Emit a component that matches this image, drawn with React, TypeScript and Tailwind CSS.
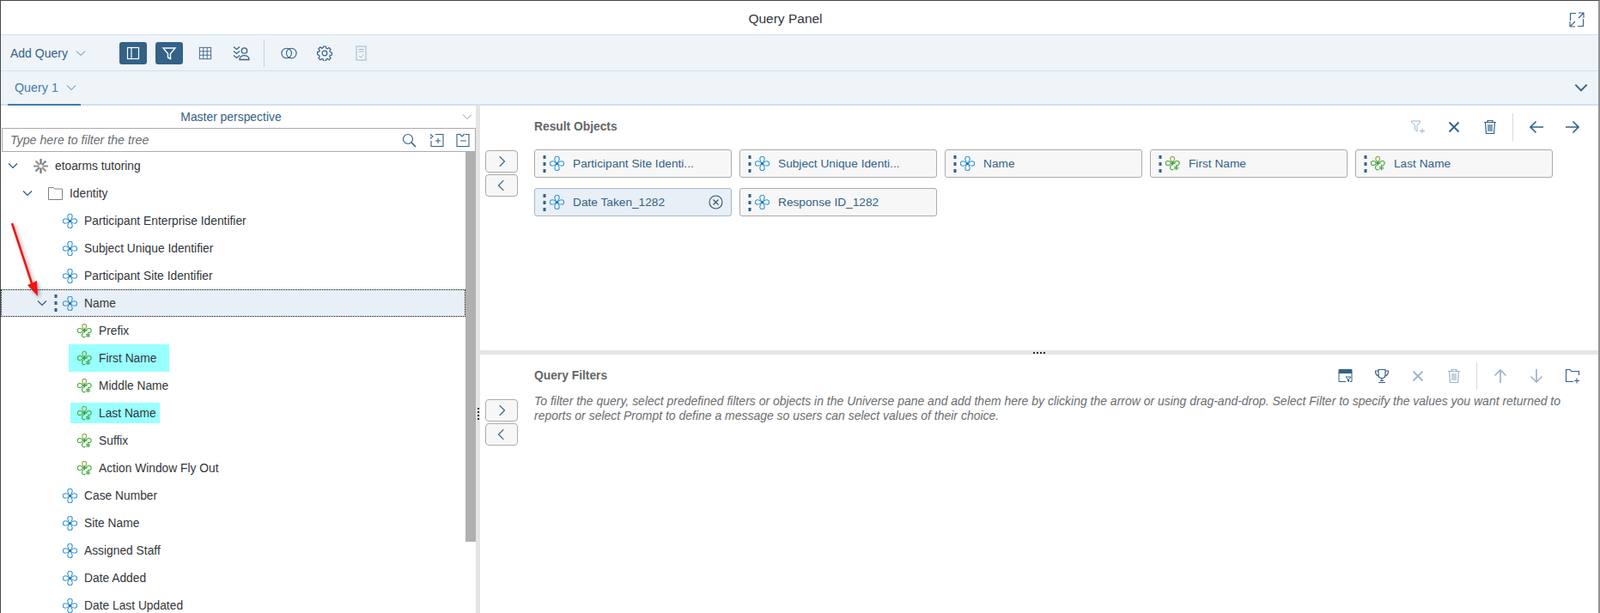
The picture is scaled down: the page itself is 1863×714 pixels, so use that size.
import React from 'react';

const FONT = "font-['Liberation_Sans',sans-serif]";

type IconProps = { className?: string };

const Svg: React.FC<{ className?: string; size?: number; children: React.ReactNode; sw?: number }> = ({ className, size = 18, children, sw = 1.2 }) => (
  <svg width={size} height={size} viewBox="0 0 18 18" fill="none" stroke="currentColor" strokeWidth={sw} className={className}>
    {children}
  </svg>
);

const Chevron: React.FC<IconProps & { dir?: 'down' | 'left' | 'right'; size?: number; sw?: number }> = ({ dir = 'down', className, size = 12, sw = 1.2 }) => (
  <svg width={size} height={size} viewBox="0 0 12 12" fill="none" stroke="currentColor" strokeWidth={sw} className={className}>
    {dir === 'down' && <path d="M1 3.500 6 8.500l5-5" />}
    {dir === 'left' && <path d="M8 1 3 6l5 5" />}
    {dir === 'right' && <path d="M4 1l5 5-5 5" />}
  </svg>
);

const Grip = () => (
  <svg width="4" height="20" viewBox="0 0 4 20" className="text-[#346187]" fill="currentColor">
    <rect x="0.5" y="0" width="3" height="4" />
    <rect x="0.5" y="8" width="3" height="4" />
    <rect x="0.5" y="16" width="3" height="4" />
  </svg>
);

// blue dimension object
const Dim = () => (
  <svg width="17" height="17" viewBox="0 0 17 17" fill="none" stroke="#2f93d6" strokeWidth="1.100" className="shrink-0">
    <path d="M7.300 7C6.500 5.500 5.800 4.300 5.800 3a2.700 2.700 0 0 1 5.400 0c0 1.300-.7 2.500-1.500 4" />
    <path d="M7.300 10c-.8 1.500-1.500 2.700-1.500 4a2.700 2.700 0 0 0 5.400 0c0-1.300-.7-2.500-1.500-4" />
    <path d="M7 7.300C5.500 6.500 4.300 5.800 3 5.800a2.700 2.700 0 0 0 0 5.400c1.300 0 2.500-.7 4-1.500" />
    <path d="M10 7.300c1.500-.8 2.700-1.500 4-1.500a2.700 2.700 0 0 1 0 5.400c-1.300 0-2.500-.7-4-1.500" />
    <path d="M7.300 7v3M9.700 7v3" />
    <circle cx="8.500" cy="8.500" r="1.500" fill="#1c6fb0" stroke="none" />
  </svg>
);

// green detail object
const Detail = () => (
  <svg width="17" height="17" viewBox="0 0 17 17" fill="none" stroke="#45a53c" strokeWidth="1.100" className="shrink-0">
    <path d="M7 6.500C6.300 5 5.800 4 5.800 2.800a2.400 2.400 0 0 1 4.800 0c0 1.200-.5 2.200-1.200 3.700" stroke="#8aa63a" />
    <path d="M6 6.800C4.800 6 3.800 5.500 2.800 5.500a2.500 2.500 0 0 0 0 5c1 0 2-.5 3.200-1.300" />
    <path d="M10.500 6.800c1.200-.8 2.200-1.300 3.200-1.300a2.500 2.500 0 0 1 0 5c-.5 0-1-.1-1.500-.3" />
    <path d="M6.800 10c-.8 1.300-1.300 2.300-1.300 3.300a2.400 2.400 0 0 0 3.800 2" />
    <path d="M12.500 10.800v5.400M10 12.200l5 2.600M15 12.200l-5 2.600" />
    <path d="M5.500 8h6M8.200 5.500v5" strokeWidth="1.600" stroke="#2f9a35" />
  </svg>
);

const Universe = () => (
  <svg width="17" height="17" viewBox="0 0 17 17" fill="none" strokeWidth="2.200" className="shrink-0">
    <path d="M8.500 0v6.500M8.500 10.500V17" stroke="#75797c" />
    <path d="M0 8.500h6.500M10.500 8.500H17" stroke="#8b8f92" />
    <path d="M2.500 2.500l4.500 4.500M10 10l4.500 4.500" stroke="#a8916f" />
    <path d="M14.500 2.500 10 7M7 10l-4.500 4.500" stroke="#6d8a96" />
  </svg>
);

const Folder = () => (
  <svg width="17" height="17" viewBox="0 0 17 17" fill="none" stroke="#7b8288" strokeWidth="1" className="shrink-0">
    <path d="M.5 15.500V1.500h6l1 1.500h9v12.500Z" />
  </svg>
);

type Row = { label: string; depth: number; kind: 'universe' | 'folder' | 'dim' | 'detail'; open?: boolean; selected?: boolean; mark?: 'full' | 'short' };

const rows: Row[] = [
  { label: 'etoarms tutoring', depth: 0, kind: 'universe', open: true },
  { label: 'Identity', depth: 1, kind: 'folder', open: true },
  { label: 'Participant Enterprise Identifier', depth: 2, kind: 'dim' },
  { label: 'Subject Unique Identifier', depth: 2, kind: 'dim' },
  { label: 'Participant Site Identifier', depth: 2, kind: 'dim' },
  { label: 'Name', depth: 2, kind: 'dim', open: true, selected: true },
  { label: 'Prefix', depth: 3, kind: 'detail' },
  { label: 'First Name', depth: 3, kind: 'detail', mark: 'full' },
  { label: 'Middle Name', depth: 3, kind: 'detail' },
  { label: 'Last Name', depth: 3, kind: 'detail', mark: 'short' },
  { label: 'Suffix', depth: 3, kind: 'detail' },
  { label: 'Action Window Fly Out', depth: 3, kind: 'detail' },
  { label: 'Case Number', depth: 2, kind: 'dim' },
  { label: 'Site Name', depth: 2, kind: 'dim' },
  { label: 'Assigned Staff', depth: 2, kind: 'dim' },
  { label: 'Date Added', depth: 2, kind: 'dim' },
  { label: 'Date Last Updated', depth: 2, kind: 'dim' },
];

const indent = ['pl-[6px]', 'pl-[23px]', 'pl-[40px]', 'pl-[57px]'];

const kindIcon = { universe: <Universe />, folder: <Folder />, dim: <Dim />, detail: <Detail /> };

const TreeRow: React.FC<{ row: Row }> = ({ row }) => {
  const body = (
    <>
      {kindIcon[row.kind]}
      <span className="ml-2 pt-[2px] text-[13.800px] text-[#32363a] whitespace-nowrap">{row.label}</span>
    </>
  );
  return (
    <div className={`h-8 flex items-center ${indent[row.depth]} ${row.selected ? 'bg-[#e8eff6] outline-1 outline-dotted -outline-offset-1 outline-black' : ''}`}>
      <div className="w-4 flex justify-center text-[#2c5a85]">{row.open && <Chevron />}</div>
      <div className="w-4 flex justify-center">{row.selected && <Grip />}</div>
      {row.mark === 'full' && <div className="h-8 flex items-center bg-[#99ffff] -ml-[10px] pl-[10px] pr-[15px]">{body}</div>}
      {row.mark === 'short' && <div className="h-6 flex items-center bg-[#99ffff] -ml-[8px] pl-[8px] pr-[4px]">{body}</div>}
      {!row.mark && body}
    </div>
  );
};

const ToolBtn: React.FC<{ children: React.ReactNode; muted?: boolean }> = ({ children, muted }) => (
  <div className={`w-[42px] h-8 flex items-center justify-center ${muted ? 'text-[#9db5cb]' : 'text-[#346187]'}`}>{children}</div>
);

const Divider = () => <div className="w-px h-8 bg-[#d5dadf]" />;

const MoveButtons = () => (
  <div className="w-[38px] ml-[6px] mt-[52px] flex flex-col gap-[2px] shrink-0">
    <div className="h-[26px] bg-[#f7f7f7] border border-[#ababab] rounded flex items-center justify-center text-[#346187]">
      <Chevron dir="right" size={14} sw={1} />
    </div>
    <div className="h-[26px] bg-[#f7f7f7] border border-[#ababab] rounded flex items-center justify-center text-[#346187]">
      <Chevron dir="left" size={14} sw={1} />
    </div>
  </div>
);

const XIcon = () => (
  <Svg sw={1.9}>
    <path d="M3.500 3.500l11 11M14.500 3.500l-11 11" />
  </Svg>
);

const Trash = () => (
  <Svg sw={1.2}>
    <path d="M2 3.500h14M6 3V1.500h6V3" />
    <path d="M3.500 3.500l1 13h9l1-13" />
    <path d="M7 6v8M9 6v8M11 6v8" />
  </Svg>
);

const ArrowH: React.FC<{ left?: boolean }> = ({ left }) => (
  <Svg sw={1.7}>
    {left ? <path d="M17 9H2M8.500 2.500 2 9l6.500 6.500" /> : <path d="M1 9h15M9.500 2.500 16 9l-6.500 6.500" />}
  </Svg>
);

const ArrowV: React.FC<{ up?: boolean }> = ({ up }) => (
  <Svg sw={1.7}>
    {up ? <path d="M9 17V2M2.500 8.500 9 2l6.500 6.500" /> : <path d="M9 1v15M2.500 9.500 9 16l6.500-6.500" />}
  </Svg>
);

const Gear = () => (
  <svg width="18" height="18" viewBox="0 0 18 18" fill="none" stroke="currentColor" strokeWidth="1.200">
    <circle cx="9" cy="9" r="2.800" />
    <path d="M7.600 1h2.800l.4 2.200 1.400.6 1.900-1.300 2 2-1.300 1.900.6 1.400 2.100.4v2.800l-2.100.4-.6 1.400 1.300 1.900-2 2-1.900-1.300-1.400.6-.4 2.100H7.600l-.4-2.100-1.400-.6-1.900 1.300-2-2 1.300-1.900-.6-1.400L.5 10.400V7.600l2.100-.4.600-1.400-1.300-1.900 2-2 1.900 1.300 1.400-.6Z" />
  </svg>
);

type Chip = { label: string; kind: 'dim' | 'detail'; active?: boolean };

const chips: Chip[] = [
  { label: 'Participant Site Identi...', kind: 'dim' },
  { label: 'Subject Unique Identi...', kind: 'dim' },
  { label: 'Name', kind: 'dim' },
  { label: 'First Name', kind: 'detail' },
  { label: 'Last Name', kind: 'detail' },
  { label: 'Date Taken_1282', kind: 'dim', active: true },
  { label: 'Response ID_1282', kind: 'dim' },
];

const ObjectChip: React.FC<{ chip: Chip }> = ({ chip }) => (
  <div className={`h-[33px] rounded-[3px] border flex items-center pl-[9px] pr-[9px] ${chip.active ? 'bg-[#e8eff6] border-[#a4b8ca]' : 'bg-[#f7f7f7] border-[#ababab]'}`}>
    <Grip />
    <div className="ml-[4px]">{chip.kind === 'dim' ? <Dim /> : <Detail />}</div>
    <span className="ml-[10px] pt-[2px] flex-1 text-[13.700px] text-[#346187] whitespace-nowrap">{chip.label}</span>
    {chip.active && (
      <svg width="17" height="17" viewBox="0 0 17 17" fill="none" stroke="#32506b" strokeWidth="1.100">
        <circle cx="8.500" cy="8.500" r="7.500" />
        <path d="M5.500 5.500l6 6M11.500 5.500l-6 6" />
      </svg>
    )}
  </div>
);

export default function App() {
  return (
    <div className={`relative w-[1863px] h-[714px] overflow-hidden flex flex-col bg-white border-t border-l border-r-2 border-t-[#4a4a4a] border-l-[#4a4a4a] border-r-[#8f9296] ${FONT}`}>
      {/* title */}
      <div className="h-[39px] shrink-0 relative flex items-center justify-center pr-[33px] text-[15.500px] text-[#32363a] bg-white">
        <span className="pt-[3px]">Query Panel</span>
        <div className="absolute right-[16px] top-[13px] text-[#346187]">
          <svg width="18" height="18" viewBox="0 0 18 18" fill="none" stroke="currentColor" strokeWidth="1.100">
            <path d="M8 1.500H1.500V10M10 16.500h6.500V8M11 1h6v6M17 1l-6 6M1 17h6M1 17v-6M1 17l6-6" />
          </svg>
        </div>
      </div>

      {/* toolbar */}
      <div className="h-[43px] shrink-0 bg-[#eff4f9] border-y border-[#cfe0f0] flex items-center text-[#346187]">
        <div className="w-[138px] pl-[11px] flex items-center">
          <span className="text-[14px] pt-[2px]">Add Query</span>
          <Chevron className="ml-[9px] text-[#5b7c99]" sw={1} />
        </div>
        <div className="w-8 h-[26px] rounded-[3px] bg-[#346187] flex items-center justify-center text-white">
          <Svg size={18}>
            <rect x="2.500" y="2.500" width="13" height="13" />
            <path d="M7 2.500v13" />
          </Svg>
        </div>
        <div className="ml-[10px] w-8 h-[26px] rounded-[3px] bg-[#346187] flex items-center justify-center text-white">
          <Svg size={18} sw={1.4}>
            <path d="M2 3h14l-5.500 6.500V15.500L7.500 14V9.500Z" />
          </Svg>
        </div>
        <div className="ml-[5px] flex">
          <ToolBtn>
            <Svg size={16} sw={1}>
              <rect x="1.500" y="1.500" width="15" height="15" />
              <path d="M6.500 1.500v15M11.500 1.500v15M1.500 6.500h15M1.500 11.500h15" />
            </Svg>
          </ToolBtn>
          <ToolBtn>
            <svg width="20" height="18" viewBox="0 0 20 18" fill="none" stroke="currentColor" strokeWidth="1.300">
              <path d="M1 1.500l3.500 3 3.500-3M1 6.500l3.500 3 3.500-3M1 11.500l3.500 3 3.500-3" />
              <circle cx="13.500" cy="6" r="3.200" />
              <path d="M8 16.500c0-6.500 11-6.500 11 0Z" />
            </svg>
          </ToolBtn>
        </div>
        <div className="ml-[5px] w-px h-8 bg-[#c8d0d8]" />
        <div className="ml-[7px] flex">
          <ToolBtn>
            <svg width="19" height="14" viewBox="0 0 19 14" fill="none" stroke="currentColor" strokeWidth="1.100">
              <circle cx="6.700" cy="7" r="5.800" />
              <circle cx="12.300" cy="7" r="5.800" />
            </svg>
          </ToolBtn>
          <ToolBtn>
            <Gear />
          </ToolBtn>
          <ToolBtn muted>
            <svg width="13" height="18" viewBox="0 0 13 18" fill="none" stroke="currentColor" strokeWidth="1">
              <rect x="1" y="1" width="11" height="16" />
              <path d="M3.500 4.500h6M3.500 7h6M4 12l2 2 3.500-3.500" />
            </svg>
          </ToolBtn>
        </div>
      </div>

      {/* tabs */}
      <div className="h-[40px] shrink-0 bg-[#eff4f9] border-b-2 border-[#d1e0ee] flex justify-between">
        <div className="ml-2 w-[85px] h-[40px] border-b-2 border-[#427cac] pl-2 flex items-center text-[#427cac]">
          <span className="text-[14.300px] pt-[2px]">Query 1</span>
          <Chevron className="ml-[9px]" sw={1} />
        </div>
        <div className="mr-[12px] flex items-center text-[#346187]">
          <Chevron size={16} sw={1.5} />
        </div>
      </div>

      <div className="flex-1 flex min-h-0">
        {/* left pane */}
        <div className="w-[553px] shrink-0 flex flex-col min-h-0">
          <div className="h-[26px] shrink-0 flex items-center">
            <span className="flex-1 text-center text-[13.900px] text-[#346187] pl-[3px]">Master perspective</span>
            <div className="w-5 flex justify-center text-[#8a99a8]">
              <Chevron sw={1} />
            </div>
          </div>
          <div className="h-7 shrink-0 ml-px border border-[#ababab] flex items-center pl-[9px] bg-white">
            <span className="flex-1 pt-[2px] text-[14.200px] italic text-[#6a6d70]">Type here to filter the tree</span>
            <div className="flex text-[#346187]">
              <div className="w-8 flex justify-center">
                <svg width="17" height="17" viewBox="0 0 17 17" fill="none" stroke="currentColor" strokeWidth="1.200">
                  <circle cx="7" cy="7" r="5.500" />
                  <path d="M11 11l5 5" strokeWidth="1.600" />
                </svg>
              </div>
              <div className="w-8 flex justify-center">
                <svg width="17" height="17" viewBox="0 0 17 17" fill="none" stroke="currentColor" strokeWidth="1.100">
                  <path d="M7 1.500h9v14H2V9M1 1.500l3 2.500-3 2.500M7 9h6M10 6v6" />
                </svg>
              </div>
              <div className="w-[29px] flex justify-center">
                <svg width="17" height="17" viewBox="0 0 17 17" fill="none" stroke="currentColor" strokeWidth="1.100">
                  <path d="M12 1.500h4v14H2v-14h3M5 1l3 3 3-3M6 9h7" />
                </svg>
              </div>
            </div>
          </div>
          <div className="flex-1 flex min-h-0 overflow-hidden">
            <div className="flex-1 min-w-0">
              {rows.map((r) => (
                <TreeRow key={r.label} row={r} />
              ))}
            </div>
            <div className="w-3 shrink-0 bg-white">
              <div className="h-[454px] bg-[#b0b0b0]" />
            </div>
          </div>
        </div>

        {/* vertical splitter */}
        <div className="w-[5px] shrink-0 bg-[#e5e5e5] relative">
          <div className="absolute left-[2px] top-[352px] w-[2px] h-[14px] border-l-2 border-dotted border-[#333]" />
        </div>

        {/* right panes */}
        <div className="flex-1 min-w-0 flex flex-col">
          <div className="h-[285px] shrink-0 flex">
            <MoveButtons />
            <div className="ml-[19px] flex-1 min-w-0 pr-[9px]">
              <div className="h-[50px] flex items-center justify-between">
                <span className="text-[13.800px] font-bold text-[#666]">Result Objects</span>
                <div className="flex items-center">
                  <ToolBtn muted>
                    <svg width="18" height="18" viewBox="0 0 18 18" fill="none" stroke="currentColor" strokeWidth="1">
                      <path d="M1 2h11L8 7.500V14l-2.500-2V7.500ZM11 13.500h6M14 10.500v6" />
                    </svg>
                  </ToolBtn>
                  <ToolBtn>
                    <XIcon />
                  </ToolBtn>
                  <ToolBtn>
                    <Trash />
                  </ToolBtn>
                  <div className="ml-[5px] mr-[6px]">
                    <Divider />
                  </div>
                  <ToolBtn>
                    <ArrowH left />
                  </ToolBtn>
                  <ToolBtn>
                    <ArrowH />
                  </ToolBtn>
                </div>
              </div>
              <div className="mt-px grid grid-cols-[repeat(5,230px)] gap-x-[9px] gap-y-3">
                {chips.map((c) => (
                  <ObjectChip key={c.label} chip={c} />
                ))}
              </div>
            </div>
          </div>

          {/* horizontal splitter */}
          <div className="h-[5px] shrink-0 bg-[#e5e5e5] flex items-center justify-center">
            <div className="w-[14px] h-[2px] border-t-2 border-dotted border-[#333]" />
          </div>

          <div className="flex-1 min-h-0 flex">
            <MoveButtons />
            <div className="ml-[19px] flex-1 min-w-0 pr-[9px]">
              <div className="h-[50px] flex items-center justify-between">
                <span className="text-[13.800px] font-bold text-[#666]">Query Filters</span>
                <div className="flex items-center">
                  <ToolBtn>
                    <svg width="18" height="18" viewBox="0 0 18 18" fill="none" stroke="currentColor" strokeWidth="1">
                      <path d="M1 1.500h15v4H1Z" fill="currentColor" />
                      <path d="M1 5v10.500h8M16 5v10.500h-2M9 10h6l-2.500 3v2.500l-1-.5v-2Z" />
                    </svg>
                  </ToolBtn>
                  <ToolBtn>
                    <svg width="18" height="18" viewBox="0 0 18 18" fill="none" stroke="currentColor" strokeWidth="1.200">
                      <path d="M5 1.500h8v6c0 2.500-1.500 4-4 4s-4-1.500-4-4Z" />
                      <path d="M5 3H1.500c0 4 1 5.500 4 6M13 3h3.500c0 4-1 5.500-4 6M9 11.500v3M5 16.500h8M7 14.500h4" />
                    </svg>
                  </ToolBtn>
                  <ToolBtn muted>
                    <XIcon />
                  </ToolBtn>
                  <ToolBtn muted>
                    <Trash />
                  </ToolBtn>
                  <div className="ml-[5px] mr-[6px]">
                    <Divider />
                  </div>
                  <ToolBtn muted>
                    <ArrowV up />
                  </ToolBtn>
                  <ToolBtn muted>
                    <ArrowV />
                  </ToolBtn>
                  <ToolBtn>
                    <svg width="18" height="18" viewBox="0 0 18 18" fill="none" stroke="currentColor" strokeWidth="1.100">
                      <path d="M16.500 8V3.500H7.500l-1.500-2H1.500v14H10M11 14.500h6M14 11.500v6" />
                    </svg>
                  </ToolBtn>
                </div>
              </div>
              <p className="mt-[-4px] text-[13.980px] leading-[17px] italic text-[#6a6d70] whitespace-nowrap">
                To filter the query, select predefined filters or objects in the Universe pane and add them here by clicking the arrow or using drag-and-drop. Select Filter to specify the values you want returned to
                <br />
                reports or select Prompt to define a message so users can select values of their choice.
              </p>
            </div>
          </div>
        </div>
      </div>

      {/* annotation arrow */}
      <svg width="60" height="100" viewBox="0 0 60 100" className="absolute left-0 top-[250px] drop-shadow-[2px_2px_2px_rgba(0,0,0,0.35)]">
        <path d="M13 9 37 82" stroke="#f01414" strokeWidth="2.500" />
        <path d="M31 81 42 76 43 94Z" fill="#f01414" />
      </svg>
    </div>
  );
}
